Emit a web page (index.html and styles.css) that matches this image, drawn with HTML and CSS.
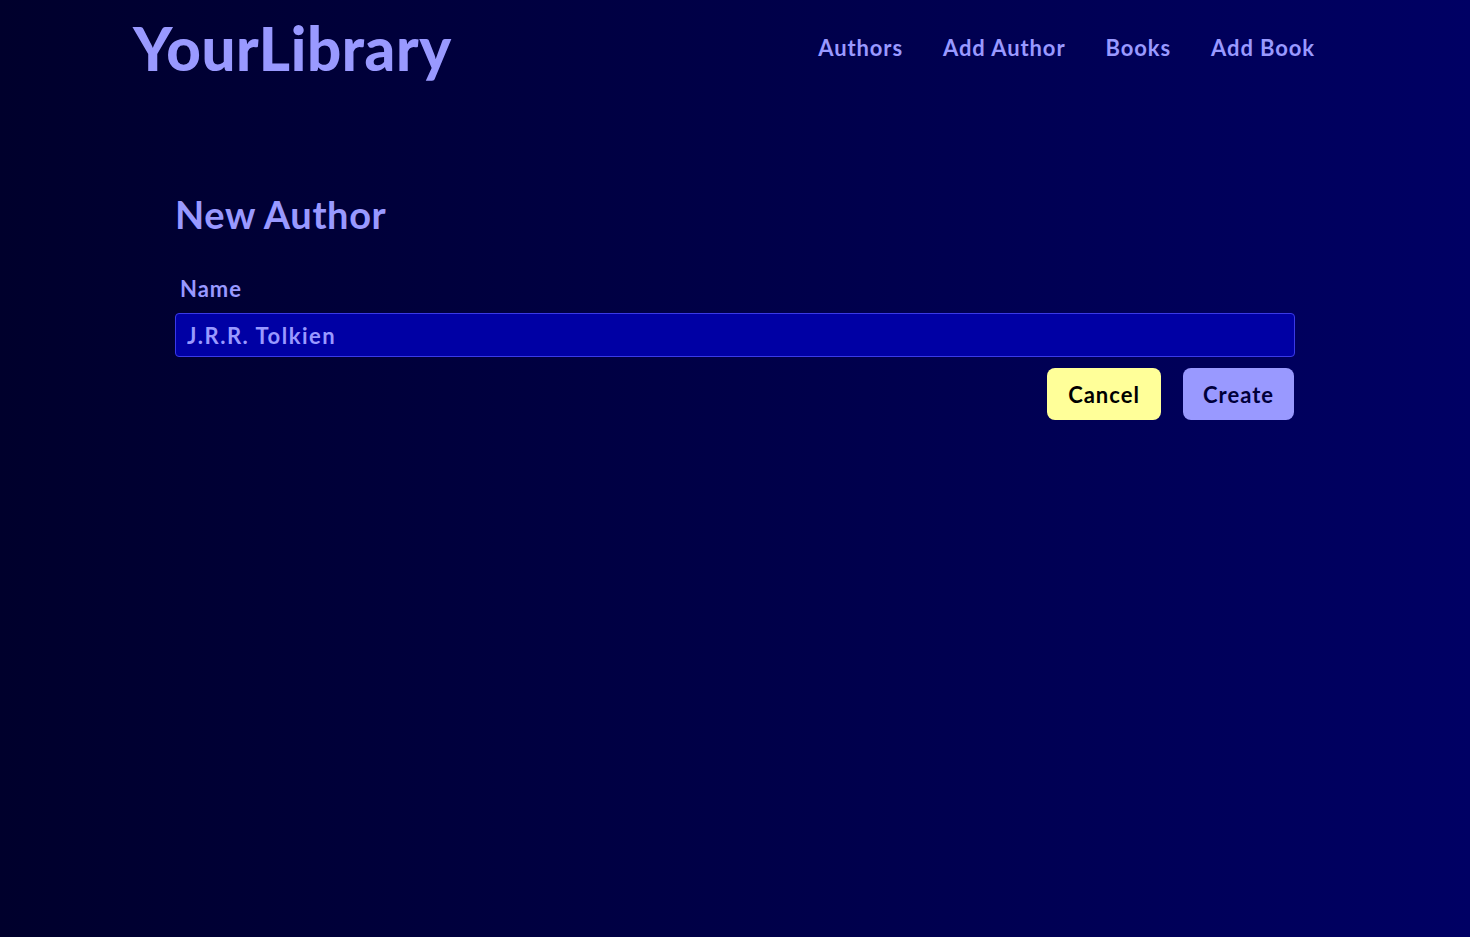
FILE: index.html
```html
<!DOCTYPE html>
<html lang="en">
<head>
<meta charset="utf-8">
<title>YourLibrary</title>
<link rel="stylesheet" href="styles.css">
</head>
<body>
<div class="page">
  <header class="header">
    <a class="logo" href="#">YourLibrary</a>
    <nav class="nav">
      <a href="#">Authors</a>
      <a href="#">Add Author</a>
      <a href="#">Books</a>
      <a href="#">Add Book</a>
    </nav>
  </header>
  <main class="main">
    <h1 class="title">New Author</h1>
    <form class="form">
      <label class="label" for="name">Name</label>
      <input class="input" id="name" type="text" value="J.R.R. Tolkien">
      <div class="actions">
        <a class="btn btn-cancel" href="#">Cancel</a>
        <button class="btn btn-create" type="submit">Create</button>
      </div>
    </form>
  </main>
</div>
</body>
</html>
```
FILE: styles.css
```css
* { box-sizing: border-box; }
html, body { margin: 0; height: 100%; }
body {
  font-family: Lato, "Noto Sans", sans-serif;
  background: linear-gradient(to right, #00002c, #000064);
  color: #9999ff;
  min-height: 937px;
}
.page {
  max-width: 1200px;
  margin: 0 auto;
}
.header {
  display: flex;
  justify-content: space-between;
  align-items: center;
  padding: 11px 20px 0 0;
}
.logo {
  font-size: 60px;
  font-weight: 900;
  letter-spacing: 0.6px;
  color: #9999ff;
  text-decoration: none;
  line-height: 74px;
  margin-left: -2px;
}
.nav {
  display: flex;
  gap: 40px;
  margin-top: -2px;
}
.nav a {
  color: #9999ff;
  text-decoration: none;
  font-size: 22px;
  font-weight: 700;
  letter-spacing: 0.9px;
}
.main {
  padding: 106px 40px 0;
}
.title {
  margin: 0 0 38px;
  font-size: 38px;
  font-weight: 700;
  line-height: 46px;
  letter-spacing: 0.6px;
  color: #9999ff;
}
.form {
  display: flex;
  flex-direction: column;
}
.label {
  font-size: 22px;
  font-weight: 700;
  padding-left: 5px;
  margin-bottom: 10px;
  line-height: 28px;
  letter-spacing: 1px;
}
.input {
  height: 44px;
  background: #0000a4;
  border: 1px solid #3a3ae6;
  border-radius: 4px;
  color: #9999ff;
  font-family: inherit;
  font-size: 22px;
  font-weight: 700;
  letter-spacing: 1.5px;
  padding: 0 11px;
  outline: none;
}
.actions {
  display: flex;
  justify-content: flex-end;
  gap: 22px;
  margin-top: 11px;
  padding-right: 1px;
}
.btn {
  display: inline-flex;
  align-items: center;
  justify-content: center;
  height: 52px;
  border: none;
  border-radius: 8px;
  font-family: inherit;
  font-size: 22px;
  font-weight: 700;
  letter-spacing: 1px;
  text-decoration: none;
  cursor: pointer;
}
.btn-cancel {
  width: 114px;
  background: #ffff99;
  color: #000000;
}
.btn-create {
  width: 111px;
  background: #9999ff;
  color: #00003a;
}
```
